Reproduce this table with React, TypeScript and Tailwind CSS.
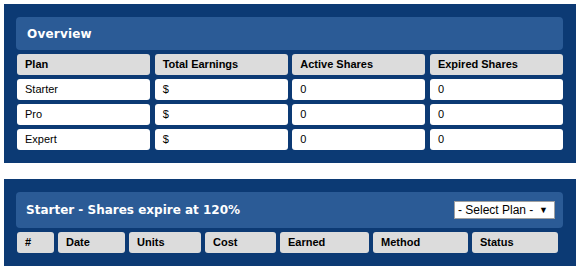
import React from "react";

const plans = [
  { name: "Starter", earnings: "$", active: "0", expired: "0" },
  { name: "Pro", earnings: "$", active: "0", expired: "0" },
  { name: "Expert", earnings: "$", active: "0", expired: "0" },
];

const historyCols = [
  { label: "#", w: "w-[37px]" },
  { label: "Date", w: "w-[67px]" },
  { label: "Units", w: "w-[72px]" },
  { label: "Cost", w: "w-[71px]" },
  { label: "Earned", w: "w-[89px]" },
  { label: "Method", w: "w-[95px]" },
  { label: "Status", w: "w-[86px]" },
];

const headCell =
  "h-[21px] flex items-center pl-2 rounded-[3px] bg-[#dcdcdc] text-[11px] font-bold text-black";
const bodyCell =
  "h-[21px] flex items-center pl-2 rounded-[3px] bg-white text-[11px] text-black";

function Panel({ children, className }: { children: React.ReactNode; className?: string }) {
  return <div className={`bg-[#0c3a74] px-3 ${className ?? ""}`}>{children}</div>;
}

export default function App() {
  return (
    <div className="w-[580px] h-[271px] bg-white px-1 pt-1 font-['Liberation_Sans',Arial,sans-serif]">
      {/* Overview */}
      <Panel className="pt-[13px] pb-[13px] pr-[13px]">
        <div className="h-[33px] bg-[#2b5b96] rounded-[4px] flex items-center pl-[11px]">
          <h1 className="text-white text-[12px] font-bold tracking-[0.2px] font-['DejaVu_Sans',Verdana,sans-serif]">
            Overview
          </h1>
        </div>
        <div className="mt-1 grid grid-cols-4 gap-x-[4.5px] gap-y-1 pl-px">
          <div className={headCell}>Plan</div>
          <div className={headCell}>Total Earnings</div>
          <div className={headCell}>Active Shares</div>
          <div className={headCell}>Expired Shares</div>
          {plans.map((p) => (
            <React.Fragment key={p.name}>
              <div className={bodyCell}>{p.name}</div>
              <div className={bodyCell}>{p.earnings}</div>
              <div className={bodyCell}>{p.active}</div>
              <div className={bodyCell}>{p.expired}</div>
            </React.Fragment>
          ))}
        </div>
      </Panel>

      {/* Plan history */}
      <Panel className="mt-4 pt-[13px] pb-[13px] pr-[13px]">
        <div className="h-[36px] bg-[#2b5b96] rounded-[4px] flex items-center justify-between pl-[10px] pr-[8px]">
          <h2 className="text-white text-[12px] font-bold font-['DejaVu_Sans',Verdana,sans-serif]">
            Starter - Shares expire at 120%
          </h2>
          <div className="w-[101px] h-[18px] bg-white border border-[#a0a0a0] flex items-center justify-between whitespace-nowrap pl-[3px] pr-[6px] text-[12px] leading-none text-black">
            <span>- Select Plan -</span>
            <span className="text-[9px]">▼</span>
          </div>
        </div>
        <div className="mt-1 flex gap-1 pl-px">
          {historyCols.map((c) => (
            <div key={c.label} className={`${headCell} ${c.w}`}>
              {c.label}
            </div>
          ))}
        </div>
      </Panel>
    </div>
  );
}
